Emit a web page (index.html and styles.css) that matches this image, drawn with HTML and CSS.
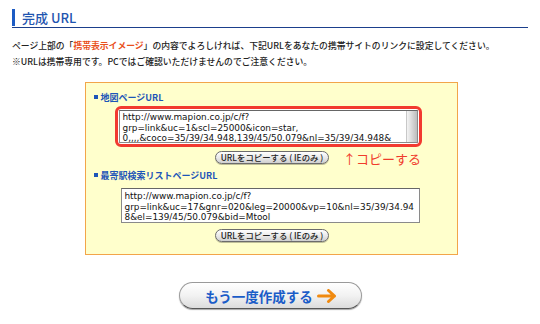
FILE: index.html
```html
<!DOCTYPE html>
<html lang="ja">
<head>
<meta charset="utf-8">
<link rel="stylesheet" href="styles.css">
</head>
<body>
<div class="page">
  <h1 class="title"><span class="title-text">完成 URL</span></h1>
  <p class="intro">ページ上部の「<em class="hl">携帯表示イメージ</em>」の内容でよろしければ、下記URLをあなたの携帯サイトのリンクに設定してください。<br>※URLは携帯専用です。PCではご確認いただけませんのでご注意ください。</p>

  <div class="panel">
    <div class="label"><span class="bullet"></span>地図ページURL</div>
    <div class="col">
      <div class="redframe">
        <div class="urlbox urlbox-scroll">
          <div class="urltext">http://www.mapion.co.jp/c/f?<br>grp=link&amp;uc=1&amp;scl=25000&amp;icon=star,<br>0,,,,&amp;coco=35/39/34.948,139/45/50.079&amp;nl=35/39/34.948&amp;</div>
          <div class="scrollbar"></div>
        </div>
      </div>
    </div>
    <div class="btnrow">
      <span></span>
      <button class="copybtn">URLをコピーする ( IEのみ )</button>
      <span class="note">↑コピーする</span>
    </div>

    <div class="label label2"><span class="bullet"></span>最寄駅検索リストページURL</div>
    <div class="col">
      <div class="urlbox urlbox2">
        <div class="urltext">http://www.mapion.co.jp/c/f?<br>grp=link&amp;uc=17&amp;gnr=020&amp;leg=20000&amp;vp=10&amp;nl=35/39/34.94<br>8&amp;el=139/45/50.079&amp;bid=Mtool</div>
      </div>
    </div>
    <div class="btnrow btnrow2">
      <span></span>
      <button class="copybtn">URLをコピーする ( IEのみ )</button>
      <span></span>
    </div>
  </div>

  <div class="again-wrap">
    <button class="again">もう一度作成する<svg class="arrow" width="20" height="14" viewBox="0 0 20 14"><path d="M1.5 7H17.5M11.5 1.5L17.5 7L11.5 12.5" fill="none" stroke="#f08a10" stroke-width="3" stroke-linecap="round" stroke-linejoin="round"/></svg></button>
  </div>
</div>
</body>
</html>
```
FILE: styles.css
```css
html, body {
  margin: 0;
  padding: 0;
  background: #ffffff;
}
body {
  font-family: "Noto Sans CJK JP", "DejaVu Sans", sans-serif;
  color: #222222;
  width: 540px;
  height: 324px;
  overflow: hidden;
}
.page {
  display: flex;
  flex-direction: column;
  padding-top: 9px;
}
.title {
  margin: 0 12px 0 12px;
  font-weight: normal;
  border-bottom: 1px solid #1b3f8c;
  display: flex;
  height: 18px;
}
.title-text {
  border-left: 3px solid #1d5cc4;
  padding-left: 7px;
  font-size: 13px;
  line-height: 17px;
  font-weight: 500;
  color: #1f55b0;
  height: 17px;
}
.intro {
  margin: 10px 0 0 12px;
  font-size: 8.8px;
  line-height: 16px;
  font-weight: 500;
  color: #222;
}
.hl {
  font-style: normal;
  font-weight: bold;
  color: #e9501c;
}
.panel {
  align-self: center;
  width: 373px;
  box-sizing: border-box;
  margin-top: 12px;
  margin-left: 2px;
  border: 1px solid #f2a54a;
  background: #ffffcc;
  padding: 8px 0 12px 0;
  display: flex;
  flex-direction: column;
}
.label {
  display: flex;
  align-items: center;
  padding-left: 8px;
  height: 12px;
  font-size: 9px;
  font-weight: bold;
  color: #1d55b8;
}
.bullet {
  width: 4px;
  height: 4px;
  background: #1d55b8;
  margin-right: 3px;
}
.col {
  padding-left: 29px;
  display: flex;
}
.redframe {
  margin-top: 3px;
  border: 3px solid #f23a30;
  border-radius: 6px;
  padding: 1px;
  background: #fff;
}
.urlbox {
  width: 299px;
  box-sizing: border-box;
  height: 33px;
  border: 1px solid #8a8a8a;
  border-top-color: #666;
  background: #fff;
  display: flex;
  overflow: hidden;
}
.urlbox2 {
  margin-left: 6px;
  margin-top: 7px;
  height: 35px;
}
.urltext {
  flex: 1;
  padding: 1px 1px 0 3px;
  font-family: "DejaVu Sans", sans-serif;
  font-size: 8.9px;
  line-height: 10.5px;
  color: #111;
  white-space: nowrap;
}
.urlbox2 .urltext {
  padding-top: 2px;
}
.scrollbar {
  width: 10px;
  background: linear-gradient(to right, #f4f4f4, #d8d8d8 50%, #bdbdbd);
  border-left: 1px solid #c8c8c8;
}
.btnrow {
  display: grid;
  grid-template-columns: 1fr auto 1fr;
  margin-top: 4px;
  height: 13px;
}
.btnrow2 {
  margin-top: 6px;
}
.copybtn {
  width: 114px;
  height: 13px;
  box-sizing: border-box;
  border: 1px solid #6c6c6c;
  border-radius: 7px;
  background: linear-gradient(#ffffff, #e6e6e6 60%, #cfcfcf);
  padding: 0;
  margin: 0 0 0 2px;
  font-family: "Noto Sans CJK JP", sans-serif;
  font-size: 8.4px;
  font-weight: 500;
  line-height: 11px;
  color: #222;
  box-shadow: 0 1px 0 rgba(0,0,0,0.25);
}
.note {
  margin-left: 14px;
  font-size: 13px;
  line-height: 13px;
  height: 13px;
  margin-top: 1px;
  color: #f03c2c;
  white-space: nowrap;
}
.label2 {
  margin-top: 5px;
}
.again-wrap {
  display: flex;
  justify-content: center;
  margin-top: 27px;
}
.again {
  width: 183px;
  height: 27px;
  box-sizing: border-box;
  border: 1px solid #9a9a9a;
  border-bottom-color: #555;
  border-radius: 14px;
  background: linear-gradient(#ffffff, #f2f2f2 50%, #dcdcdc);
  box-shadow: 0 1px 1px rgba(0,0,0,0.35);
  font-family: "Noto Sans CJK JP", sans-serif;
  font-size: 13.5px;
  font-weight: bold;
  color: #1a5cc8;
  display: flex;
  align-items: center;
  justify-content: center;
  padding: 0 0 0 2px;
  gap: 4px;
}
.arrow {
  display: block;
}
```
